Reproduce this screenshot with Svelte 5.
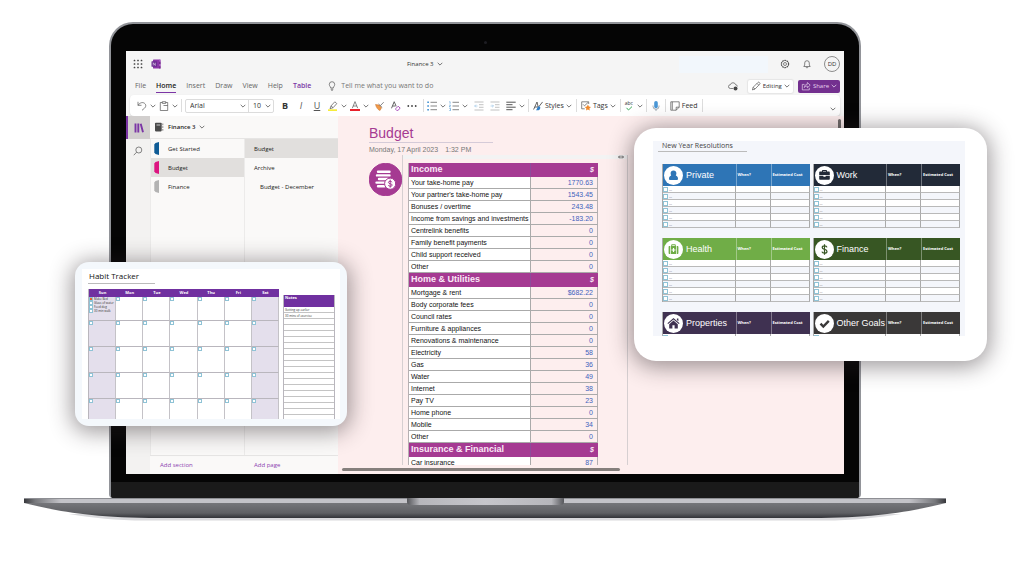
<script>
    let font = $state("Arial");
    let fontSize = $state("10");
    let section = $state("Budget");
    let page = $state("Budget");

    const menu = ["File", "Home", "Insert", "Draw", "View", "Help", "Table"];

    const sections = [
        { name: "Get Started", tab: "blue" },
        { name: "Budget", tab: "pink" },
        { name: "Finance", tab: "grey" }
    ];

    const pages = [
        { name: "Budget", sub: false },
        { name: "Archive", sub: false },
        { name: "Budget - December", sub: true }
    ];

    const budget = [
        {
            title: "Income",
            rows: [
                ["Your take-home pay", "1770.63"],
                ["Your partner's take-home pay", "1543.45"],
                ["Bonuses / overtime", "243.48"],
                ["Income from savings and investments", "-183.20"],
                ["Centrelink benefits", "0"],
                ["Family benefit payments", "0"],
                ["Child support received", "0"],
                ["Other", "0"]
            ]
        },
        {
            title: "Home & Utilities",
            rows: [
                ["Mortgage & rent", "$682.22"],
                ["Body corporate fees", "0"],
                ["Council rates", "0"],
                ["Furniture & appliances", "0"],
                ["Renovations & maintenance", "0"],
                ["Electricity", "58"],
                ["Gas", "36"],
                ["Water", "49"],
                ["Internet", "38"],
                ["Pay TV", "23"],
                ["Home phone", "0"],
                ["Mobile", "34"],
                ["Other", "0"]
            ]
        },
        {
            title: "Insurance & Financial",
            rows: [["Car insurance", "87"]]
        }
    ];

    const days = ["Sun", "Mon", "Tue", "Wed", "Thu", "Fri", "Sat"];
    const weeks = [1, 2, 3, 4, 5];
    const habits = ["Make Bed", "Glass of water", "Feed dog", "30 min walk"];
    const notes = ["Getting up earlier", "30 mins of exercise"].concat(Array(17).fill(""));

    const goals = [
        { name: "Private", icon: "person", color: "blue" },
        { name: "Work", icon: "case", color: "navy" },
        { name: "Health", icon: "kit", color: "green" },
        { name: "Finance", icon: "dollar", color: "forest" },
        { name: "Properties", icon: "house", color: "plum" },
        { name: "Other Goals", icon: "tick", color: "charcoal" }
    ];
</script>

{#snippet chevron()}
    <svg class="chev" viewBox="0 0 6 6" aria-hidden="true"><path d="M.7 1.8 3 4.1 5.3 1.8" /></svg>
{/snippet}

{#snippet goalIcon(name)}
    <svg class="goal-icon" viewBox="0 0 19 19" aria-hidden="true">
        <circle class="disc" cx="9.5" cy="9.5" r="9.5" />
        {#if name == "person"}
            <path d="M9.5 4.4c1.8 0 2.9 1.2 2.9 2.9 0 1-.3 1.800-.6 2.200 1.400.5 2.200 1.500 2.200 3.300 0 .9-.5 1.300-1.300 1.300H6.300c-.8 0-1.300-.4-1.300-1.300 0-1.800.8-2.800 2.200-3.300-.3-.4-.6-1.200-.6-2.200 0-1.700 1.100-2.900 2.900-2.900z" />
        {:else if name == "case"}
            <path fill-rule="evenodd" d="M7 5.500V4.800c0-.6.3-.9.9-.9h3.200c.6 0 .9.3.9.9v.7h1.800c.6 0 1 .4 1 1V9H4.200V6.500c0-.6.4-1 1-1zm1 0h3v-.6H8zM4.200 9.800h4.200v1h2.200v-1h4.200v2.900c0 .6-.4 1-1 1H5.200c-.6 0-1-.4-1-1z" />
        {:else if name == "kit"}
            <path fill-rule="evenodd" d="M7.200 6V5.100c0-.6.3-.9.900-.9h2.800c.6 0 .9.300.9.900V6h.4v8H6.800V6zm1 0h2.600v-.8H8.200zm.7 2v1.400H7.500v1.200h1.400V12h1.200v-1.400h1.400V9.400h-1.400V8zM4.600 7c0-.6.400-1 1-1h.5v8h-.5c-.6 0-1-.4-1-1zM12.900 6h.5c.6 0 1 .4 1 1v6c0 .6-.4 1-1 1h-.5z" />
        {:else if name == "dollar"}
            <path class="line" d="M12 7.300C11.700 6.300 10.800 5.900 9.500 5.900c-1.400 0-2.300.7-2.300 1.700 0 2.500 4.800 1.200 4.800 3.800 0 1-.9 1.700-2.500 1.700-1.400 0-2.300-.5-2.600-1.500M9.500 4.300v10.400" />
        {:else if name == "house"}
            <path d="M9.500 3.900 15.600 9.200l-.8.9-5.300-4.600-5.300 4.600-.8-.9zM12.900 4.600h1.500v2.600l-1.500-1.300zM9.500 6.500l4.300 3.700v4.300h-3.200v-3.200H8.400v3.200H5.200v-4.300z" />
        {:else}
            <path class="tick" d="M5.500 9.700 8.300 12.500 13.800 6.900" />
        {/if}
    </svg>
{/snippet}

<main class="stage">
    <div class="laptop">
        <div class="lid">
            <div class="camera"></div>
            <div class="screen">
                <header class="titlebar">
                    <div class="apps">
                        <button aria-label="App launcher">
                            <svg class="icon" viewBox="0 0 10 10">
                                {#each [1.5, 5, 8.5] as y}
                                    {#each [1.5, 5, 8.5] as x}
                                        <rect class="fill" x={x - 0.8} y={y - 0.8} width="1.6" height="1.6" rx=".4" />
                                    {/each}
                                {/each}
                            </svg>
                        </button>
                        <svg class="icon" viewBox="0 0 10 10" aria-hidden="true">
                            <rect x="2" y=".5" width="7.500" height="9" rx=".6" fill="#8a35a8" stroke="none" />
                            <path d="M8.300 .5h1.200v2.300H8.300zM8.300 5h1.200v2.300H8.300z" fill="#b06cc8" stroke="none" />
                            <path d="M8.300 2.800h1.200V5H8.300zM8.300 7.200h1.200v2.300H8.300z" fill="#6f2486" stroke="none" />
                            <rect x=".5" y="2.300" width="5.500" height="5.500" rx=".5" fill="#6b2c91" stroke="none" />
                            <path d="M2.200 6.500V3.700L4.300 6.500V3.700" stroke="#fff" stroke-width=".5" />
                        </svg>
                    </div>
                    <button class="doc">Finance 3 {@render chevron()}</button>
                    <div class="account">
                        <span class="status"></span>
                        <button aria-label="Settings">
                            <svg class="icon" viewBox="0 0 10 10">
                                <circle cx="5" cy="5" r="3.600" stroke-width="1.200" stroke-dasharray="1.700 .56" />
                                <circle cx="5" cy="5" r="1.500" />
                            </svg>
                        </button>
                        <button aria-label="Notifications">
                            <svg class="icon" viewBox="0 0 10 10"><path d="M1.800 7.500 2.700 6V4a2.300 2.300 0 0 1 4.600 0v2l.9 1.500zM4 8.100c.2 1 1.800 1 2 0" /></svg>
                        </button>
                        <button class="avatar">DD</button>
                    </div>
                </header>

                <nav class="menu">
                    {#each menu as item}
                        <a href="#{item}" class:current={item == "Home"} class:context={item == "Table"}>{item}</a>
                    {/each}
                    <label class="tell">
                        <svg class="icon" viewBox="0 0 10 10"><path d="M3.700 7C3.700 5.600 2.300 5.200 2.300 3.400a2.700 2.700 0 0 1 5.400 0C7.700 5.200 6.300 5.600 6.300 7zM3.700 8.200h2.600M4.200 9.300h1.600" /></svg>
                        <input type="text" placeholder="Tell me what you want to do" aria-label="Tell me what you want to do" />
                    </label>
                    <svg class="icon cloud" viewBox="0 0 10 10" aria-label="Saved" role="img">
                        <path d="M5 7.500H2.400a1.900 1.900 0 0 1 0-3.800 2.700 2.700 0 0 1 5.200 0A1.900 1.900 0 0 1 9.400 5.500" />
                        <circle class="fill" cx="7.500" cy="7.500" r="2" />
                    </svg>
                    <button class="mode">
                        <svg class="icon" viewBox="0 0 10 10"><path d="m1.400 8.900.7-2.600L6.900 1.500a1 1 0 0 1 1.500 0l.3.3a1 1 0 0 1 0 1.400L4 8.100zM6 2.400l1.800 1.800M2.100 6.300 4 8.100" /></svg>
                        Editing {@render chevron()}
                    </button>
                    <button class="mode share">
                        <svg class="icon" viewBox="0 0 10 10"><path d="M3.500 3.400H1.300v5.500h7V6.800M3.300 6.600C3.500 4.300 4.700 3.300 6.300 3.300V1.500L9.200 4.200 6.300 6.800V5C5 5 4.200 5.400 3.300 6.600z" /></svg>
                        Share {@render chevron()}
                    </button>
                </nav>

                <div class="toolbar">
                    <button class="split" aria-label="Undo">
                        <svg class="icon" viewBox="0 0 10 10"><path d="M1 .8v3.500h3.500M1 4.300C2.800 1.600 5.700.9 7.500 2.300c2 1.600 1.300 3.700 0 4.900L5 9.300" /></svg>
                        {@render chevron()}
                    </button>
                    <button class="split" aria-label="Paste">
                        <svg class="icon" viewBox="0 0 10 10"><path d="M3.300 1.500H1.300v8h7.400v-8H6.700M3.300.7h3.400v1.700H3.300zM4.500 4.500h4.200" /></svg>
                        {@render chevron()}
                    </button>
                    <span class="sep"></span>
                    <div class="pickers">
                        <label class="pick family">
                            <select bind:value={font} aria-label="Font"><option>Arial</option><option>Calibri</option></select>
                            {@render chevron()}
                        </label>
                        <label class="pick">
                            <select bind:value={fontSize} aria-label="Font size"><option>10</option><option>12</option></select>
                            {@render chevron()}
                        </label>
                    </div>
                    <div class="cells">
                        <button class="b">B</button>
                        <button class="i">I</button>
                        <button class="u">U</button>
                    </div>
                    <button class="split" aria-label="Highlight">
                        <svg class="icon" viewBox="0 0 10 10">
                            <rect x="0" y="8.300" width="9" height="1.700" fill="#f6ec3c" stroke="none" />
                            <path d="M2 7.700 3 4.900 6.800.8 8.800 2.600 5.100 6.700zM3 4.900l2.100 1.800" />
                        </svg>
                        {@render chevron()}
                    </button>
                    <button class="split" aria-label="Font color">
                        <svg class="icon" viewBox="0 0 10 10">
                            <rect x="0" y="8" width="10" height="2" fill="#e8212b" stroke="none" />
                            <path d="M2.300 7.200 5 .6l2.700 6.600M3.200 5h3.600" />
                        </svg>
                        {@render chevron()}
                    </button>
                    <div class="cells">
                        <button aria-label="Format painter">
                            <svg class="icon" viewBox="0 0 10 10">
                                <path d="M.5 3.500 4 4l2.500 2.800L5 9.500C2.800 8.800 1.300 6.500.5 3.500z" fill="#f09a4a" stroke="#c56a20" stroke-width=".5" />
                                <path d="M3.600 3 7.200 6.500M5.400 4.600 8.700 1.200" />
                            </svg>
                        </button>
                        <button aria-label="Clear formatting">
                            <svg class="icon" viewBox="0 0 10 10">
                                <path d="M.5 7.300 3.200.7l2 4.600M1.500 5h3" stroke-width=".9" />
                                <path d="M4.800 7.600 7.200 5.200 9.200 7.200 6.900 9.400H5.700L4.800 8.500z" stroke="#a13fb5" stroke-width=".9" />
                            </svg>
                        </button>
                        <button aria-label="More font options">
                            <svg class="icon" viewBox="0 0 10 10"><circle class="fill" cx="1.300" cy="5" r=".9" /><circle class="fill" cx="5" cy="5" r=".9" /><circle class="fill" cx="8.700" cy="5" r=".9" /></svg>
                        </button>
                    </div>
                    <span class="sep"></span>
                    <button class="split" aria-label="Bullets">
                        <svg class="icon" viewBox="0 0 10 10">
                            <path d="M3.500 1.300H10M3.500 5H10M3.500 8.700H10" />
                            <path d="M.3 1.300h1.600M.3 5h1.600M.3 8.700h1.600" stroke="#3d8fd1" stroke-width="1.600" />
                        </svg>
                        {@render chevron()}
                    </button>
                    <button class="split" aria-label="Numbering">
                        <svg class="icon" viewBox="0 0 10 10">
                            <path d="M3.500 1.300H10M3.500 5H10M3.500 8.700H10" />
                            <path d="M.4.700h.7v2M.3 4.100h1.200L.4 5.800h1.200M.3 7.400h1.200v2.200H.3" stroke="#3d8fd1" stroke-width=".6" />
                        </svg>
                        {@render chevron()}
                    </button>
                    <div class="cells faint">
                        <button aria-label="Decrease indent">
                            <svg class="icon" viewBox="0 0 10 10"><path d="M.5 1H9.500M5 3.700h4.500M5 6.300h4.500M.5 9H9.500" /><path d="M3.500 5H.7M1.900 3.700.6 5l1.300 1.300" stroke="#3d8fd1" /></svg>
                        </button>
                        <button aria-label="Increase indent">
                            <svg class="icon" viewBox="0 0 10 10"><path d="M.5 1H9.500M5 3.700h4.500M5 6.300h4.500M.5 9H9.500" /><path d="M.6 5h2.800M2.200 3.700 3.500 5 2.200 6.300" stroke="#3d8fd1" /></svg>
                        </button>
                    </div>
                    <button class="split" aria-label="Align">
                        <svg class="icon" viewBox="0 0 10 10"><path d="M.3 1.200h9.400M.3 3.700H6.500M.3 6.200h9.400M.3 8.700H6.500" stroke-width="1" /></svg>
                        {@render chevron()}
                    </button>
                    <span class="sep"></span>
                    <button class="labelled">
                        <svg class="icon" viewBox="0 0 10 10">
                            <path d="M.6 8.500 4 1l1.200 5M1.800 6h3.500M9.600.9 6 5.500" stroke-width=".9" />
                            <path d="M6.300 5.300c1 .4 1.300 1.600.7 2.600C6.200 9.300 4.300 9.500 2.800 9.300 4.300 8.600 4 5.400 6.300 5.300z" fill="#2f7fc9" stroke="none" />
                        </svg>
                        Styles {@render chevron()}
                    </button>
                    <span class="sep"></span>
                    <button class="labelled">
                        <svg class="icon" viewBox="0 0 10 10">
                            <path d="M7.700 3V.8H.7v7h3M2 3.300l1.500 1.500L7.200 1.300" />
                            <path d="m6.900 3.500 1 2.100 2.100.3-1.600 1.500.4 2.200-1.900-1.100L5 9.600l.4-2.200L3.800 5.900l2.100-.3z" fill="#f08a2c" stroke="none" />
                        </svg>
                        Tags {@render chevron()}
                    </button>
                    <span class="sep"></span>
                    <button class="split" aria-label="Spelling">
                        <span class="spell">
                            abc
                            <svg viewBox="0 0 10 5" aria-hidden="true"><path d="M2.500 1.800 4.500 4 8 .6" /></svg>
                        </span>
                        {@render chevron()}
                    </button>
                    <span class="sep"></span>
                    <button class="mic" aria-label="Dictate">
                        <svg class="icon" viewBox="0 0 10 10"><path d="M2 4.500v.8a3 3 0 0 0 6 0v-.8M5 8.300V10" stroke="#7d8a96" /><rect x="3.200" y="0" width="3.600" height="7.200" rx="1.800" fill="#4a97d6" stroke="none" /></svg>
                    </button>
                    <span class="sep"></span>
                    <button class="labelled">
                        <svg class="icon" viewBox="0 0 10 10"><path d="M.8.8h8.400v5.400L6.200 9.200H.8zM9.200 6.200h-3v3M2.300.8v8" /></svg>
                        Feed
                    </button>
                    <span class="sep"></span>
                    <button class="expand" aria-label="Ribbon options">{@render chevron()}</button>
                </div>

                <div class="workspace">
                    <div class="rail">
                        <button class="on" aria-label="Notebooks">
                            <svg class="icon" viewBox="0 0 10 10"><path d="M1.500.5v9M4.300.5v9M6.700.8 9 9.300" stroke="#7b35a5" stroke-width="1.900" /></svg>
                        </button>
                        <button aria-label="Search">
                            <svg class="icon" viewBox="0 0 10 10"><circle cx="5.800" cy="4" r="3" /><path d="M3.600 6.200.8 9.200" /></svg>
                        </button>
                    </div>
                    <div class="notebook">
                        <button class="name">
                            <svg class="icon" viewBox="0 0 10 10"><rect x="1" y=".7" width="6.700" height="8.700" rx=".8" fill="#4a4a4a" stroke="none" /><path d="M2.500 3h3.700" stroke="#fff" /><path d="M8.800 1.500v1.700M8.800 4.200v1.700M8.800 7v1.700" /></svg>
                            Finance 3 {@render chevron()}
                        </button>
                        <div class="lists">
                            <div class="list">
                                {#each sections as s}
                                    <button class="entry" class:chosen={section == s.name} onclick={() => (section = s.name)}>
                                        <svg class="tab {s.tab}" viewBox="0 0 5 13" aria-hidden="true"><path d="M5 0v13L1.500 12 .3 10.500v-8L1.500 1z" /></svg>
                                        {s.name}
                                    </button>
                                {/each}
                            </div>
                            <div class="list">
                                {#each pages as p}
                                    <button class="entry page" class:sub={p.sub} class:chosen={page == p.name} onclick={() => (page = p.name)}>{p.name}</button>
                                {/each}
                            </div>
                        </div>
                        <div class="adders">
                            <button>Add section</button>
                            <button>Add page</button>
                        </div>
                    </div>
                    <div class="canvas">
                        <div class="sheet">
                            <h1>Budget</h1>
                            <p class="date"><span>Monday, 17 April 2023</span><span>1:32 PM</span></p>
                            <div class="content">
                                <svg class="coins" viewBox="0 0 33 33" aria-hidden="true">
                                    <circle cx="16.500" cy="16.500" r="16.300" fill="#a53a92" />
                                    <path d="M9 8.800h11.500M8 12.400h12.500M10 16h9M7.500 19.600h8M9 23.200h6.500" />
                                    <circle cx="21.200" cy="20.700" r="5.600" fill="#fff" />
                                    <path class="sign" d="M23 19c-.5-1-3.600-1.200-3.600.4 0 1.900 3.800.7 3.800 2.700 0 1.600-3.300 1.500-3.900.3M21.200 17v7.300" />
                                </svg>
                                <div class="note">
                                    <div class="grip"><svg viewBox="0 0 6 4" aria-hidden="true"><path d="M2 .5.500 2 2 3.500M4 .5 5.500 2 4 3.500M.5 2h5" /></svg></div>
                                    <table class="budget">
                                        {#each budget as group}
                                            <tbody>
                                                <tr><th scope="col">{group.title}</th><th scope="col" class="cur">$</th></tr>
                                                {#each group.rows as row}
                                                    <tr><td>{row[0]}</td><td class="sum">{row[1]}</td></tr>
                                                {/each}
                                            </tbody>
                                        {/each}
                                    </table>
                                </div>
                            </div>
                        </div>
                        <div class="vbar"></div>
                        <div class="hbar"></div>
                    </div>
                </div>
            </div>
            <div class="chin"></div>
        </div>

        <svg class="base" viewBox="0 0 922 24" preserveAspectRatio="none" aria-hidden="true">
            <defs>
                <linearGradient id="body" x1="0" y1="0" x2="0" y2="1">
                    <stop offset="0" stop-color="#85868a" />
                    <stop offset=".3" stop-color="#737478" />
                    <stop offset=".75" stop-color="#5f6064" />
                    <stop offset="1" stop-color="#323338" />
                </linearGradient>
                <linearGradient id="rim" x1="0" y1="0" x2="1" y2="0">
                    <stop offset="0" stop-color="#37383c" />
                    <stop offset=".012" stop-color="#77787c" />
                    <stop offset=".04" stop-color="#c3c3c8" />
                    <stop offset=".96" stop-color="#c3c3c8" />
                    <stop offset=".988" stop-color="#77787c" />
                    <stop offset="1" stop-color="#37383c" />
                </linearGradient>
                <linearGradient id="notch" x1="0" y1="0" x2="1" y2="0">
                    <stop offset="0" stop-color="#55565a" />
                    <stop offset=".08" stop-color="#b6b6bb" />
                    <stop offset=".5" stop-color="#c6c6cb" />
                    <stop offset=".92" stop-color="#b6b6bb" />
                    <stop offset="1" stop-color="#55565a" />
                </linearGradient>
            </defs>
            <path d="M45 16 H877 C850 20 830 22.500 800 22.500 H122 C90 22.500 70 20 45 16z" fill="#d9d9dc" />
            <path d="M0 0H922V5C893 12 858 20 787 20H135C64 20 29 12 0 5z" fill="url(#body)" />
            <path d="M0 0H922V5H0z" fill="url(#rim)" />
            <path d="M0 0H922V1H0z" fill="#8e8f94" />
            <path d="M383 0H540V4Q540 7 536 7H387Q383 7 383 4z" fill="url(#notch)" />
        </svg>
    </div>

    <section class="card habit">
        <div class="habit-page">
            <h2>Habit Tracker</h2>
            <div class="habit-body">
                <table class="month">
                    <thead>
                        <tr>{#each days as day}<th scope="col">{day}</th>{/each}</tr>
                    </thead>
                    <tbody>
                        {#each weeks as week}
                            <tr>
                                {#each days as day}
                                    <td>
                                        {#if week == 1 && day == "Sun"}
                                            {#each habits as habit, i}
                                                <label><input type="checkbox" checked={i == 0} />{habit}</label>
                                            {/each}
                                        {:else}
                                            <input type="checkbox" aria-label="{day}, week {week}" />
                                        {/if}
                                    </td>
                                {/each}
                            </tr>
                        {/each}
                    </tbody>
                </table>
                <table class="notes">
                    <thead><tr><th scope="col">Notes</th></tr></thead>
                    <tbody>
                        {#each notes as note}
                            <tr><td>{note}</td></tr>
                        {/each}
                    </tbody>
                </table>
            </div>
        </div>
    </section>

    <section class="card resolutions">
        <div class="goals-page">
            <h2>New Year Resolutions</h2>
            <div class="goals">
                {#each goals as goal, n}
                    <table class="goal {goal.color}">
                        <thead>
                            <tr>
                                <th scope="col"><div class="goal-name">{@render goalIcon(goal.icon)}{goal.name}</div></th>
                                <th scope="col" class="when">When?</th>
                                <th scope="col" class="cost">Estimated Cost</th>
                            </tr>
                        </thead>
                        <tbody>
                            {#each { length: n < 4 ? 6 : 1 } as _, i}
                                <tr>
                                    <td><label><input type="checkbox" aria-label="{goal.name} {i + 1}" />{n < 4 ? "..." : ""}</label></td>
                                    <td></td>
                                    <td></td>
                                </tr>
                            {/each}
                        </tbody>
                    </table>
                {/each}
            </div>
        </div>
    </section>
</main>

<style>
    :global(body) {
        margin: 0;
        background: #fff;
    }

    .stage {
        position: relative;
        padding: 22px 78px 0 24px;
        font-family: "Open Sans", "Noto Sans", sans-serif;
        font-size: 7px;
        line-height: 10px;
        color: #333;
    }

    button, input, select {
        font: inherit;
        color: inherit;
        background: none;
        border: 0;
        padding: 0;
        margin: 0;
    }

    button {
        display: flex;
        align-items: center;
        justify-content: center;
        cursor: pointer;
    }

    h1, h2, p {
        margin: 0;
        font-weight: normal;
        white-space: nowrap;
    }

    table {
        border-spacing: 0;
        table-layout: fixed;
    }

    th, td {
        padding: 0;
        text-align: left;
        white-space: nowrap;
    }

    .icon {
        flex: none;
        width: 10px;
        height: 10px;
        fill: none;
        stroke: #555;
        stroke-width: 0.7;
    }

    .icon .fill {
        fill: #444;
        stroke: none;
    }

    .chev {
        flex: none;
        width: 6px;
        height: 6px;
        fill: none;
        stroke: #555;
        stroke-width: 0.8;
    }

    /* laptop */
    .lid {
        margin: 0 85px;
        border: 2px solid #929499;
        border-bottom: 0;
        border-radius: 24px 24px 4px 4px;
        background: #050505;
        overflow: hidden;
    }

    .camera {
        width: 3px;
        height: 3px;
        margin: 17px auto 7px;
        border-radius: 50%;
        background: #1d1d22;
    }

    .screen {
        margin: 0 15px 8px;
        background: #f5f5f5;
    }

    .chin {
        height: 16px;
        background: #1a1a1a;
    }

    .base {
        display: block;
        width: 100%;
        height: 24px;
    }

    /* header rows */
    .titlebar {
        display: grid;
        grid-template-columns: 274px 1fr auto;
        align-items: center;
        height: 26px;
        padding: 0 4px 0 7px;
    }

    .apps {
        display: flex;
        gap: 8px;
    }

    .doc {
        justify-self: start;
        gap: 3px;
        font-size: 6px;
        font-weight: 500;
    }

    .account {
        display: flex;
        align-items: center;
        gap: 12px;
    }

    .status {
        width: 89px;
        height: 17px;
        background: #f2f7fc;
    }

    .avatar {
        box-sizing: border-box;
        width: 16px;
        height: 16px;
        border: 1px solid #8d8d8d;
        border-radius: 50%;
        font-size: 6px;
        font-weight: 500;
    }

    .menu {
        display: flex;
        align-items: center;
        gap: 10px;
        height: 18px;
        padding: 0 4px 0 9px;
    }

    .menu a {
        color: #666;
        text-decoration: none;
        line-height: 13px;
        border-bottom: 1px solid transparent;
    }

    .menu .current {
        color: #222;
        font-weight: 600;
        border-color: #7b35a5;
    }

    .menu .context {
        color: #7b35a5;
        font-weight: 600;
    }

    .tell {
        display: flex;
        flex: 1;
        align-items: center;
        gap: 4px;
        padding-left: 6px;
        color: #777;
    }

    .tell input {
        flex: 1;
        min-width: 0;
    }

    .tell input::placeholder {
        color: #777;
    }

    .mode {
        height: 13px;
        padding: 0 3px;
        gap: 2px;
        border-radius: 2px;
        background: #fff;
        box-shadow: 0 0 1px 1px #e6e6e6;
        font-size: 6px;
        font-weight: 500;
    }

    .share {
        margin-left: -5px;
        background: #73308f;
        box-shadow: none;
        color: #e6d3ee;
    }

    .share svg {
        stroke: #e6d3ee;
    }

    /* toolbar */
    .toolbar {
        display: flex;
        align-items: center;
        gap: 3px;
        height: 21px;
        margin: 0 4px;
        padding: 0 4px 0 7px;
        border-radius: 4px;
        background: #fff;
        box-shadow: 0 1px 2px rgba(0, 0, 0, 0.16);
    }

    .split {
        width: 19px;
        justify-content: space-between;
    }

    .sep {
        width: 1px;
        height: 13px;
        background: #ddd;
    }

    .pickers {
        display: flex;
        box-sizing: border-box;
        width: 89px;
        height: 14px;
        border: 1px solid #dcdcdc;
        border-radius: 2px;
    }

    .pick {
        display: grid;
        flex: 1;
        align-items: center;
        padding: 0 2px 0 4px;
    }

    .family {
        flex: none;
        width: 56px;
        border-right: 1px solid #dcdcdc;
    }

    .pick select {
        grid-area: 1 / 1;
        width: 100%;
        appearance: none;
    }

    .pick .chev {
        grid-area: 1 / 1;
        justify-self: end;
        pointer-events: none;
    }

    .cells {
        display: flex;
    }

    .cells button {
        width: 16px;
    }

    .faint {
        opacity: 0.5;
    }

    .b, .i, .u {
        font-size: 9px;
    }

    .b {
        font-weight: bold;
    }

    .i {
        font-style: italic;
        color: #555;
    }

    .u {
        text-decoration: underline;
        color: #555;
    }

    .labelled {
        gap: 2px;
        padding: 0 1px;
    }

    .spell {
        display: grid;
        width: 10px;
        font-size: 5px;
        line-height: 5px;
    }

    .spell svg {
        height: 5px;
        fill: none;
        stroke: #3daa5c;
    }

    .mic {
        width: 12px;
    }

    .expand {
        margin-left: auto;
        align-self: end;
        padding-bottom: 4px;
    }

    /* notebook navigation */
    .workspace {
        display: flex;
        height: 358px;
    }

    .rail {
        width: 24px;
        background: #f3f2f1;
    }

    .rail button {
        box-sizing: border-box;
        width: 24px;
        height: 23px;
    }

    .rail .on {
        border-left: 2px solid #7b35a5;
        background: #d2cfce;
    }

    .notebook {
        display: flex;
        flex-direction: column;
        width: 188px;
        background: #faf9f8;
        font-size: 6px;
        color: #222;
    }

    .name {
        justify-content: flex-start;
        gap: 4px;
        height: 23px;
        padding-left: 4px;
        border-bottom: 1px solid #e6e5e4;
        font-weight: 600;
    }

    .lists {
        display: grid;
        grid-template-columns: 1fr 1fr;
        flex: 1;
    }

    .list {
        border-left: 1px solid #ecebea;
    }

    .entry {
        width: 100%;
        height: 19px;
        justify-content: flex-start;
        gap: 9px;
        padding-left: 3px;
    }

    .page {
        padding-left: 9px;
    }

    .sub {
        padding-left: 15px;
    }

    .chosen {
        background: #e1dfdd;
    }

    .tab {
        width: 5px;
        height: 13px;
    }

    .tab.blue { fill: #0f5c96; }
    .tab.pink { fill: #dc1580; }
    .tab.grey { fill: #b3b3b3; }

    .adders {
        display: grid;
        grid-template-columns: 1fr 1fr;
        height: 18px;
        border-top: 1px solid #e6e5e4;
        color: #8a3fb0;
    }

    .adders button {
        justify-content: flex-start;
        padding-left: 10px;
    }

    /* page canvas */
    .canvas {
        display: grid;
        grid-template-columns: 1fr 3px;
        grid-template-rows: 1fr 9px;
        flex: 1;
        min-width: 0;
        padding: 0 3px 0 4px;
        background: #fdeeee;
    }

    .sheet {
        overflow: hidden;
        min-height: 0;
        padding: 9px 0 0 27px;
        font-family: "Liberation Sans", Arial, sans-serif;
    }

    h1 {
        width: 124px;
        border-bottom: 1px solid #d5cbd8;
        font-size: 14px;
        line-height: 17px;
        color: #a53a92;
    }

    .date {
        display: flex;
        gap: 7px;
        padding-top: 2px;
        color: #777;
    }

    .content {
        display: flex;
        align-items: flex-start;
    }

    .coins {
        flex: none;
        width: 33px;
        height: 33px;
        margin-top: 8px;
        fill: none;
        stroke: #fff;
        stroke-width: 2.4;
        stroke-linecap: round;
    }

    .coins circle {
        stroke: #a53a92;
        stroke-width: 1;
    }

    .coins .sign {
        stroke: #a53a92;
        stroke-width: 1;
    }

    .note {
        padding: 0 29px 0 5px;
        border: 1px solid #d6cfd1;
        border-top: 0;
    }

    .grip {
        display: flex;
        justify-content: flex-end;
        height: 4px;
        margin: 0 -29px 4px -5px;
        padding-right: 3px;
        background: #f3f3f3;
    }

    .grip svg {
        width: 6px;
        fill: none;
        stroke: #555;
        stroke-width: 0.8;
    }

    .budget {
        width: 190px;
        background: #fff;
        border-left: 1px solid #b5b0b2;
        color: #111;
    }

    .budget th {
        padding-left: 2px;
        border-bottom: 1px solid #a53a92;
        background: #a53a92;
        color: #fbe9f7;
        font-size: 9px;
        line-height: 13px;
    }

    .budget td {
        padding-left: 2px;
        border-bottom: 1px solid #aaa;
        line-height: 11px;
    }

    .budget .cur {
        box-sizing: border-box;
        width: 68px;
        padding-right: 4px;
        border-left: 1px solid #8d4a9a;
        font-size: 7px;
        font-style: italic;
        text-align: right;
    }

    .budget .sum {
        padding-right: 4px;
        border-left: 1px solid #aaa;
        border-right: 1px solid #b5b0b2;
        background: #fdeeee;
        color: #3f63bd;
        text-align: right;
    }

    .vbar {
        height: 60px;
        margin-top: 3px;
        border-radius: 2px;
        background: #6f6b6a;
    }

    .hbar {
        width: 278px;
        height: 3px;
        margin-top: 3px;
        border-radius: 2px;
        background: #857f7c;
    }

    /* floating previews */
    .card {
        position: absolute;
        box-sizing: border-box;
        box-shadow: 0 3px 22px 3px rgba(40, 30, 35, 0.45);
    }

    .card input {
        box-sizing: border-box;
        flex: none;
        appearance: none;
        display: block;
        border: 1px solid #8fc3d6;
        background: #fff;
    }

    .habit {
        left: 75px;
        top: 262px;
        width: 272px;
        padding: 7px;
        border-radius: 14px;
        background: #f4f8fc;
    }

    .habit-page {
        height: 150px;
        overflow: hidden;
        padding: 0 5px 0 6px;
        background: #fff;
    }

    .habit h2 {
        width: 66px;
        padding-left: 1px;
        border-bottom: 1px solid #bbb;
        font-size: 8px;
        line-height: 14px;
        color: #111;
    }

    .habit-body {
        display: flex;
        align-items: flex-start;
        gap: 4px;
        padding-top: 5px;
        font-size: 3px;
        line-height: 4px;
    }

    .month {
        flex: none;
        width: 191px;
        border-left: 1px solid #b9b6bd;
    }

    .month th {
        height: 8px;
        background: #7030a0;
        color: #fff;
        font-size: 4px;
        text-align: center;
    }

    .month td {
        height: 25px;
        border-right: 1px solid #c4c2c7;
        border-bottom: 1px solid #b9b6bd;
        vertical-align: top;
    }

    .month tbody tr:first-child td {
        height: 23px;
    }

    .month td:first-child, .month td:last-child {
        background: #e4dfec;
    }

    .month label {
        display: flex;
        align-items: center;
        gap: 1px;
    }

    .month input {
        width: 4px;
        height: 4px;
    }

    .month label input:checked {
        background: #e8622c;
    }

    .notes {
        width: 53px;
        margin-top: 6px;
        border: 1px solid #b9b6bd;
        border-width: 0 1px;
    }

    .notes th {
        height: 11px;
        padding: 1px 0 0 1px;
        background: #7030a0;
        color: #fff;
        font-size: 4px;
        vertical-align: top;
    }

    .notes td {
        height: 5px;
        padding-left: 1px;
        border-bottom: 1px solid #c4c4c4;
    }

    .resolutions {
        top: 128px;
        right: 37px;
        width: 353px;
        padding: 13px 22px 25px 19px;
        border-radius: 22px;
        background: #fff;
    }

    .goals-page {
        height: 195px;
        overflow: hidden;
        padding: 0 5px;
        background: #f4f6fb;
    }

    .resolutions h2 {
        width: 85px;
        padding-left: 4px;
        border-bottom: 1px solid #bbb;
        font-size: 7px;
        line-height: 10px;
        color: #444;
    }

    .goals {
        display: grid;
        grid-template-columns: 1fr 1fr;
        gap: 10px 3px;
        padding: 12px 0 0 4px;
    }

    .goal {
        width: 100%;
        border-left: 1px solid #aaa;
    }

    .goal th {
        height: 22px;
        color: #fff;
        font-weight: normal;
        background: var(--tone);
    }

    .goal-name {
        display: flex;
        align-items: center;
        gap: 3px;
        padding-left: 1px;
        font-family: "Liberation Sans", Arial, sans-serif;
        font-size: 9px;
    }

    .goal-icon {
        flex: none;
        width: 19px;
        height: 19px;
        fill: var(--tone);
    }

    .goal-icon .disc {
        fill: #fff;
    }

    .goal-icon .line {
        fill: none;
        stroke: var(--tone);
        stroke-width: 1.2;
    }

    .goal-icon .tick {
        fill: none;
        stroke: var(--tone);
        stroke-width: 2.4;
    }

    .goal .when, .goal .cost {
        box-sizing: border-box;
        width: 35px;
        padding-left: 1px;
        border-left: 1px solid rgba(255, 255, 255, 0.35);
        font-size: 4px;
        font-weight: bold;
    }

    .goal .cost {
        width: 39px;
    }

    .goal td {
        height: 6px;
        border-right: 1px solid #aaa;
        border-bottom: 1px solid #b9b9b9;
        background: #fff;
        font-size: 4px;
        line-height: 5px;
    }

    .goal tr:nth-child(even) td {
        background: #f4f6fb;
    }

    .goal label {
        display: flex;
        align-items: center;
        gap: 1px;
    }

    .goal input {
        width: 5px;
        height: 5px;
    }

    .goal.blue { --tone: #2e75b6; }
    .goal.navy { --tone: #222a38; }
    .goal.green { --tone: #70ad47; }
    .goal.forest { --tone: #375623; }
    .goal.plum { --tone: #3f3151; }
    .goal.charcoal { --tone: #3a3838; }
</style>
